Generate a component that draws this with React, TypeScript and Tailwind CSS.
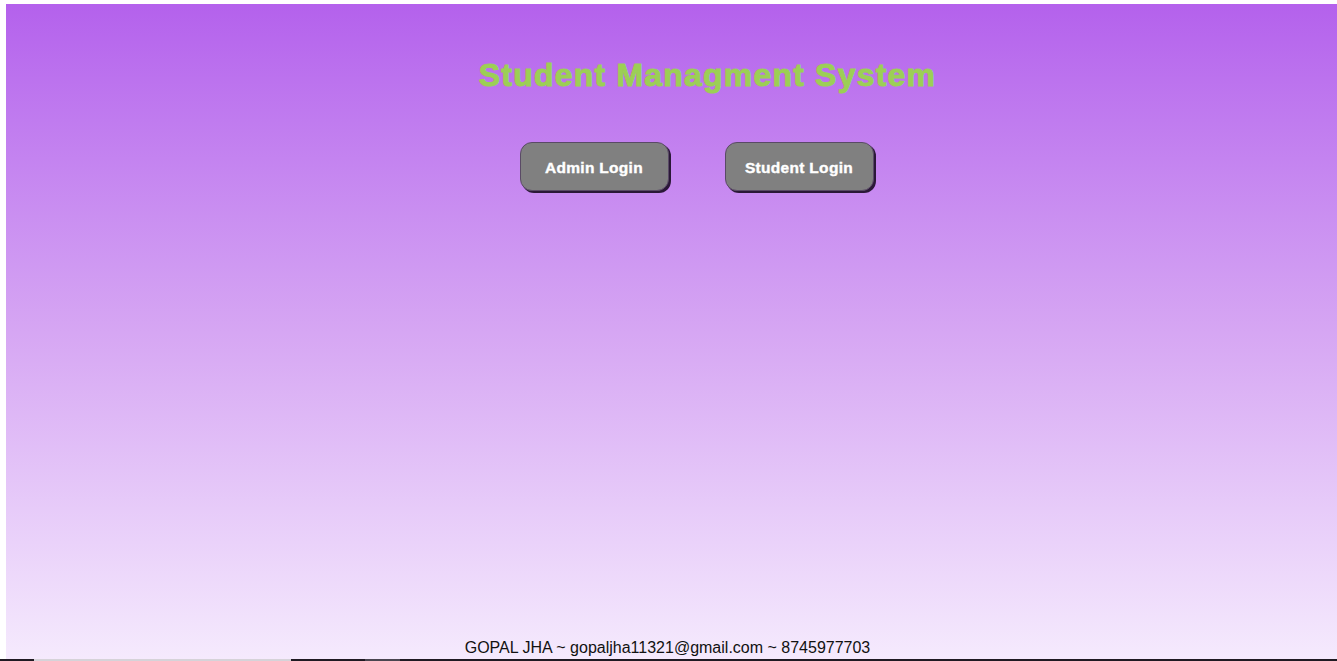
import React from 'react';

const font = { fontFamily: '"Liberation Sans", Arial, sans-serif' };

function LoginButton({ label }: { label: string }) {
  return (
    <button
      className="w-[149px] h-[49px] pt-[3px] rounded-[12px] bg-[#808080] text-white text-[15.5px] font-bold tracking-[0.3px] [-webkit-text-stroke:0.4px_#ffffff] shadow-[2px_2px_0_0_#2b1838] border border-[#5a4a66]"
      style={font}
    >
      {label}
    </button>
  );
}

export default function App() {
  return (
    <div className="h-[661px] w-full bg-white flex flex-col overflow-hidden" style={font}>
      <div className="flex-1 ml-[6px] mt-[4px] bg-gradient-to-b from-[#b461ec] via-[#d6a6f3] to-[#f5eafd] flex flex-col">
        {/* heading */}
        <div className="flex justify-center pl-[72px] pt-[53px]">
          <h1
            className="text-[32px] leading-[36px] font-bold text-[#9ccf55] tracking-[1.2px] [-webkit-text-stroke:1px_#9ccf55]"
            style={{ fontFamily: '"Arial Black", "Liberation Sans", Arial, sans-serif' }}
          >
            Student Managment System
          </h1>
        </div>

        {/* login buttons */}
        <div className="flex justify-center gap-[56px] pl-[50px] mt-[49px]">
          <LoginButton label="Admin Login" />
          <LoginButton label="Student Login" />
        </div>

        <footer className="mt-auto pb-[2px] flex justify-center pr-[8px]">
          <p className="text-[16px] leading-[18px] text-[#111]">
            GOPAL JHA ~ gopaljha11321@gmail.com ~ 8745977703
          </p>
        </footer>
      </div>

      {/* bottom strip */}
      <div className="h-[2px] flex">
        <div className="w-[34px] bg-[#1f1a22]" />
        <div className="w-[257px] bg-[#d6d3d9]" />
        <div className="w-[74px] bg-[#1f1a22]" />
        <div className="w-[35px] bg-[#4a4650]" />
        <div className="flex-1 bg-[#1f1a22]" />
      </div>
    </div>
  );
}
